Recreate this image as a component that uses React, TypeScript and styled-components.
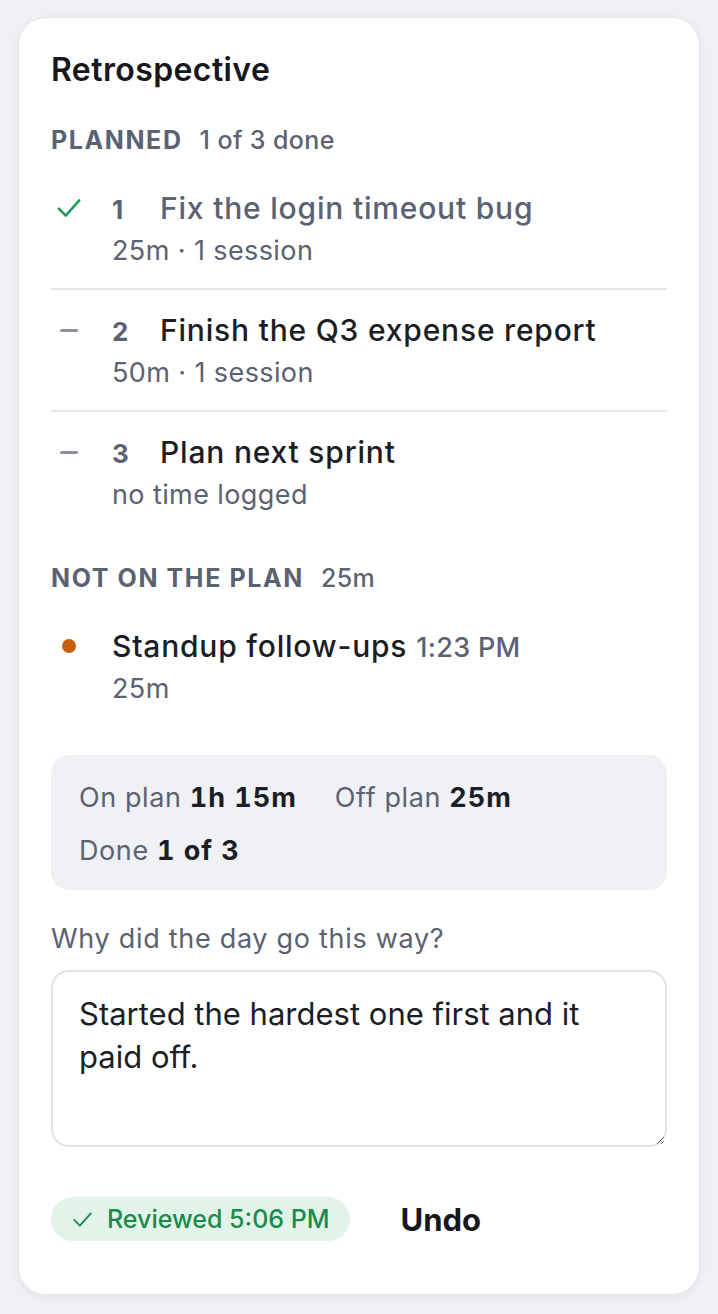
import React, { useState } from 'react'
import styled, { createGlobalStyle } from 'styled-components'

const GlobalStyle = createGlobalStyle`
  html, body {
    margin: 0;
    padding: 0;
    background: #f0f1f5;
  }
  body {
    font-family: 'Inter', 'Noto Sans', sans-serif;
    color: #1b1e24;
  }
  * {
    box-sizing: border-box;
  }
`

const Page = styled.div`
  padding: 17px 18px;
`

const Card = styled.section`
  background: #fff;
  border: 1px solid #e4e6eb;
  border-radius: 28px;
  box-shadow: 0 2px 10px rgba(30, 40, 60, 0.06);
  padding: 34px 32px 53px;
`

const Title = styled.h1`
  margin: 0;
  font-size: 32px;
  line-height: 36px;
  font-weight: 600;
  color: #16181d;
  letter-spacing: 0.4px;
`

const SectionHead = styled.div`
  display: flex;
  align-items: baseline;
  gap: 17px;
  margin-top: ${({ first }) => (first ? '37px' : '31px')};
  font-size: 25px;
  line-height: 30px;
  color: #5b6272;
`

const SectionLabel = styled.span`
  font-weight: 700;
  text-transform: uppercase;
  letter-spacing: 1.6px;
`

const SectionCount = styled.span`
  font-weight: 500;
  letter-spacing: 0.4px;
`

const List = styled.ul`
  list-style: none;
  margin: 13px 0 0;
  padding: 0;
`

const Row = styled.li`
  display: flex;
  align-items: flex-start;
  gap: 25px;
  padding: 22px 0 21px;
  border-bottom: 2px solid #e4e6ea;

  &:last-child {
    border-bottom: none;
  }
`

const Marker = styled.span`
  width: 36px;
  height: 36px;
  flex-shrink: 0;
  display: flex;
  align-items: center;
  justify-content: center;
`

const Dash = styled.span`
  width: 18px;
  height: 3px;
  border-radius: 2px;
  background: #8b919d;
`

const Dot = styled.span`
  width: 14px;
  height: 14px;
  border-radius: 50%;
  background: #c6600f;
`

const Body = styled.div`
  display: flex;
  flex-direction: column;
  gap: 9px;
  min-width: 0;
`

const Head = styled.div`
  display: flex;
  align-items: baseline;
  height: 36px;
  line-height: 36px;
`

const Num = styled.span`
  width: 48px;
  flex-shrink: 0;
  font-size: 26px;
  font-weight: 700;
  color: #5b6272;
`

const ItemTitle = styled.span`
  font-size: 30px;
  font-weight: 500;
  letter-spacing: 0.8px;
  white-space: nowrap;
  color: ${({ done }) => (done ? '#5b6272' : '#1b1e24')};
`

const Time = styled.span`
  margin-left: 9px;
  font-size: 27px;
  font-weight: 500;
  letter-spacing: 0.3px;
  color: #5b6272;
`

const Meta = styled.div`
  height: 32px;
  font-size: 27px;
  line-height: 32px;
  letter-spacing: 0.4px;
  color: #5b6272;
`

const Summary = styled.div`
  margin-top: 29px;
  background: #f0f1f5;
  border-radius: 18px;
  padding: 25px 28px 21px;
  display: flex;
  flex-direction: column;
  gap: 17px;
`

const StatRow = styled.div`
  display: flex;
  gap: 38px;
  font-size: 27px;
  line-height: 36px;
  letter-spacing: 0.6px;
  color: #5b6272;
`

const Stat = styled.span`
  b {
    font-weight: 700;
    color: #1b1e24;
    font-variant-numeric: tabular-nums;
    letter-spacing: 1px;
  }
`

const Label = styled.label`
  display: block;
  margin-top: 33px;
  font-size: 27px;
  line-height: 32px;
  letter-spacing: 0.7px;
  color: #5b6272;
`

const Note = styled.textarea`
  display: block;
  width: 100%;
  height: 177px;
  margin-top: 15px;
  padding: 20px 26px;
  border: 2px solid #e1e3e8;
  border-radius: 18px;
  font-family: 'Inter', 'Noto Sans', sans-serif;
  font-size: 31px;
  line-height: 43px;
  color: #1b1e24;
  background: #fff;
  outline: none;
  resize: vertical;
`

const Footer = styled.div`
  display: flex;
  align-items: center;
  gap: 51px;
  margin-top: 50px;
`

const Badge = styled.span`
  display: inline-flex;
  align-items: center;
  gap: 14px;
  height: 44px;
  padding: 0 20px 0 21px;
  border-radius: 22px;
  background: #e2f4e9;
  color: #1c8a4b;
  font-size: 25px;
  font-weight: 500;
  white-space: nowrap;
`

const UndoButton = styled.button`
  border: none;
  background: none;
  padding: 0;
  height: 44px;
  font-family: 'Inter', 'Noto Sans', sans-serif;
  font-size: 31px;
  font-weight: 700;
  color: #16181d;
  cursor: pointer;
`

const Check = ({ size = 26, color = '#1f9a55', width = 2.3 }) => (
  <svg width={size} height={size} viewBox="0 0 24 24" fill="none">
    <path
      d="M2.5 12.5l6.5 6.5L21.5 5"
      stroke={color}
      strokeWidth={width}
      strokeLinecap="round"
      strokeLinejoin="round"
    />
  </svg>
)

const planned = [
  { n: 1, title: 'Fix the login timeout bug', meta: '25m · 1 session', done: true },
  { n: 2, title: 'Finish the Q3 expense report', meta: '50m · 1 session', done: false },
  { n: 3, title: 'Plan next sprint', meta: 'no time logged', done: false },
]

const App = () => {
  const [note, setNote] = useState('Started the hardest one first and it paid off.')

  return (
    <Page>
      <GlobalStyle />
      <Card>
        <Title>Retrospective</Title>

        <SectionHead first>
          <SectionLabel>Planned</SectionLabel>
          <SectionCount>1 of 3 done</SectionCount>
        </SectionHead>
        <List>
          {planned.map((item) => (
            <Row key={item.n}>
              <Marker>{item.done ? <Check /> : <Dash />}</Marker>
              <Body>
                <Head>
                  <Num>{item.n}</Num>
                  <ItemTitle done={item.done}>{item.title}</ItemTitle>
                </Head>
                <Meta>{item.meta}</Meta>
              </Body>
            </Row>
          ))}
        </List>

        <SectionHead>
          <SectionLabel>Not on the plan</SectionLabel>
          <SectionCount>25m</SectionCount>
        </SectionHead>
        <List>
          <Row>
            <Marker>
              <Dot />
            </Marker>
            <Body>
              <Head>
                <ItemTitle>Standup follow-ups</ItemTitle>
                <Time>1:23 PM</Time>
              </Head>
              <Meta>25m</Meta>
            </Body>
          </Row>
        </List>

        <Summary>
          <StatRow>
            <Stat>
              On plan <b>1h 15m</b>
            </Stat>
            <Stat>
              Off plan <b>25m</b>
            </Stat>
          </StatRow>
          <StatRow>
            <Stat>
              Done <b>1 of 3</b>
            </Stat>
          </StatRow>
        </Summary>

        <Label htmlFor="why">Why did the day go this way?</Label>
        <Note id="why" value={note} onChange={(e) => setNote(e.target.value)} />

        <Footer>
          <Badge>
            <Check size={21} color="#1c8a4b" width={2.1} />
            Reviewed 5:06 PM
          </Badge>
          <UndoButton type="button">Undo</UndoButton>
        </Footer>
      </Card>
    </Page>
  )
}

export default App
